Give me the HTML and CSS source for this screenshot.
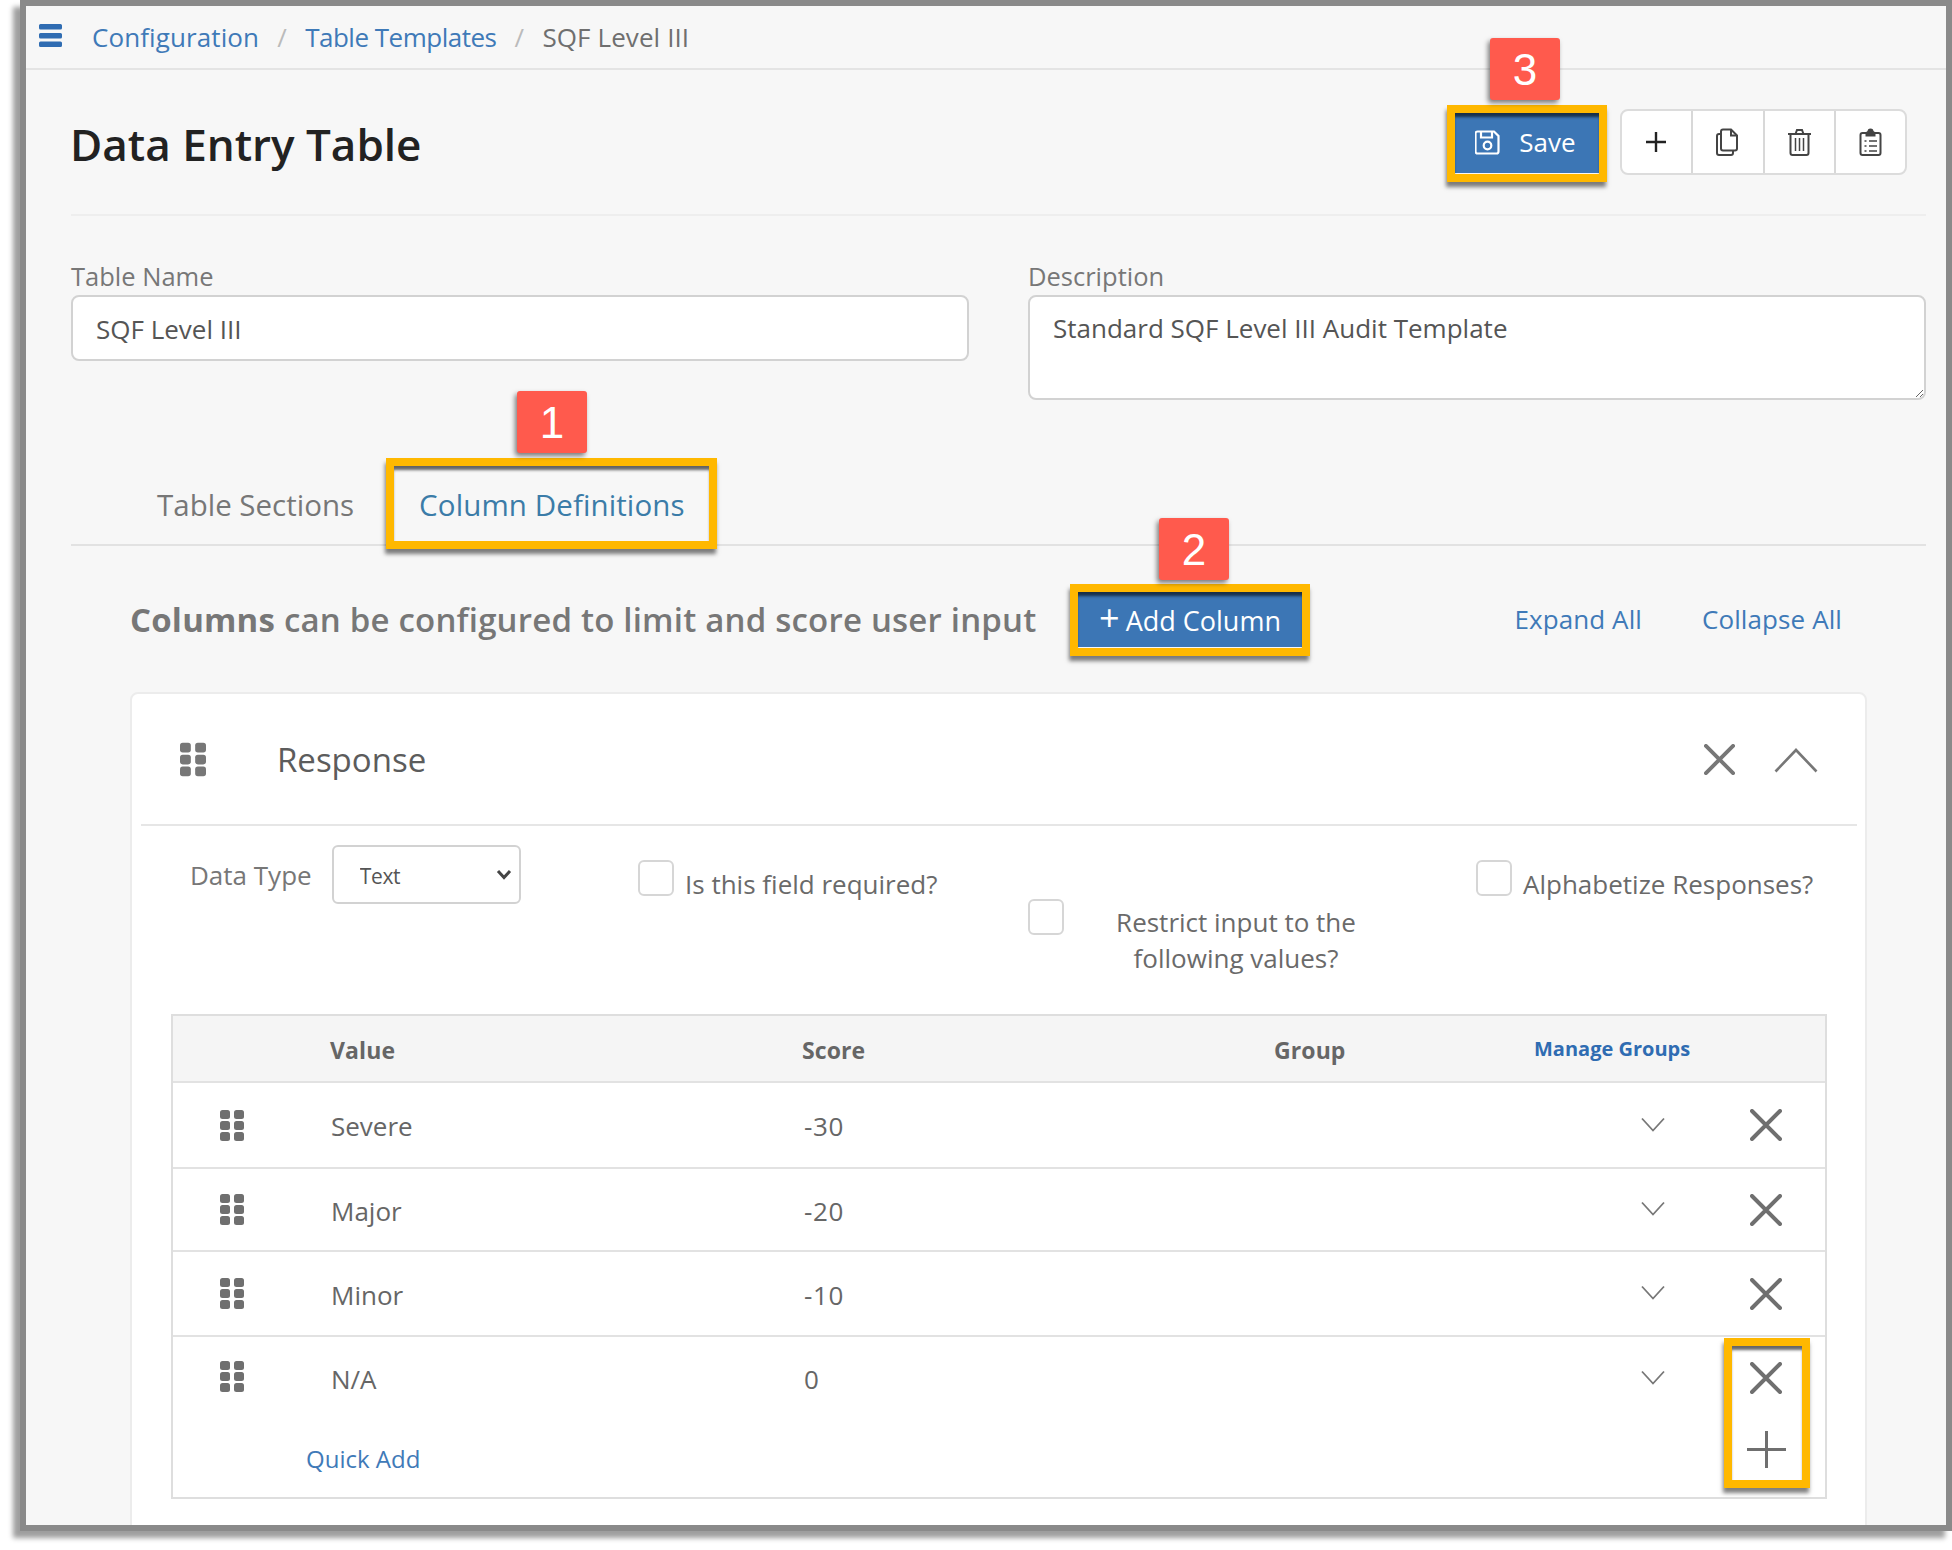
FILE: index.html
```html
<!DOCTYPE html>
<html lang="en">
<head>
<meta charset="utf-8">
<title>Data Entry Table</title>
<link rel="stylesheet" href="styles.css">
</head>
<body>
<svg class="defs" width="0" height="0" aria-hidden="true">
  <symbol id="i-drag" viewBox="0 0 24 31"><g fill="currentColor"><rect x="0" y="0" width="10" height="9" rx="2.5"/><rect x="14" y="0" width="10" height="9" rx="2.5"/><rect x="0" y="11" width="10" height="9" rx="2.5"/><rect x="14" y="11" width="10" height="9" rx="2.5"/><rect x="0" y="22" width="10" height="9" rx="2.5"/><rect x="14" y="22" width="10" height="9" rx="2.5"/></g></symbol>
  <symbol id="i-x" viewBox="0 0 32 32"><path d="M2 2 30 30M30 2 2 30" fill="none" stroke="currentColor" stroke-width="4" stroke-linecap="round"/></symbol>
  <symbol id="i-chev" viewBox="0 0 24 15"><path d="M1 1.500 12 13.500 23 1.500" fill="none" stroke="currentColor" stroke-width="1.800"/></symbol>
</svg>
<div class="window">
  <nav class="crumbs">
    <svg class="burger" viewBox="0 0 23 23"><path d="M0 1.500A1.500 1.500 0 0 1 1.500 0h20a1.500 1.500 0 0 1 1.500 1.500V4a1.500 1.500 0 0 1-1.500 1.500h-20A1.500 1.500 0 0 1 0 4ZM0 10.500A1.500 1.500 0 0 1 1.500 9h20a1.500 1.500 0 0 1 1.500 1.500V13a1.500 1.500 0 0 1-1.500 1.500h-20A1.500 1.500 0 0 1 0 13ZM0 19a1.500 1.500 0 0 1 1.500-1.500h20A1.500 1.500 0 0 1 23 19v2.500a1.500 1.500 0 0 1-1.500 1.500h-20A1.500 1.500 0 0 1 0 21.500Z" fill="currentColor"/></svg>
    <a class="link">Configuration</a><span class="sep">/</span><a class="link crumb-tight">Table Templates</a><span class="sep">/</span><span class="here">SQF Level III</span>
  </nav>
  <main class="page">
    <header class="titlebar">
      <h1 class="title">Data Entry Table</h1>
      <div class="actions">
        <button class="btn btn-save">
          <svg class="save-icon" viewBox="0 0 25 25"><g fill="none" stroke="currentColor" stroke-width="2.200"><path d="M2.500 1.500h16.500l4.500 4.500v15.500a2 2 0 0 1-2 2h-19a2 2 0 0 1-2-2v-18a2 2 0 0 1 2-2Z"/><path d="M6 1.500v6h11v-6"/><circle cx="12.500" cy="15.500" r="3.800"/></g></svg>
          <span>Save</span>
        </button>
        <div class="tools">
          <span class="tool"><svg viewBox="0 0 22 22"><path d="M11 1v20M1 11h20" fill="none" stroke="currentColor" stroke-width="2.400"/></svg></span>
          <span class="tool"><svg viewBox="0 0 25 28"><g fill="none" stroke="currentColor" stroke-width="2"><path d="M8 1.500h8l6 6v13a2 2 0 0 1-2 2H8a2 2 0 0 1-2-2v-17a2 2 0 0 1 2-2Z"/><path d="M16 1.500v6h6"/><path d="M6 6H4a2 2 0 0 0-2 2v17a2 2 0 0 0 2 2h12a2 2 0 0 0 2-2v-2"/></g></svg></span>
          <span class="tool"><svg viewBox="0 0 25 28"><g fill="none" stroke="currentColor" stroke-width="2"><path d="M1 6h23M8.500 6l1.500-4h5l1.500 4"/><path d="M3.500 6v19a2 2 0 0 0 2 2h14a2 2 0 0 0 2-2V6"/><path d="M8.500 10v13M12.500 10v13M16.500 10v13" stroke-width="1.500"/></g></svg></span>
          <span class="tool"><svg viewBox="0 0 23 28"><g fill="none" stroke="currentColor" stroke-width="2"><rect x="1.500" y="5" width="20" height="22" rx="2"/><path d="M7.500 5l2-1.500a2 2 0 0 1 4 0l2 1.500v2.500h-8Z" fill="currentColor"/><path d="M5.500 13h2M10 13h8M5.500 18h2M10 18h8M5.500 23h2M10 23h8" stroke-width="1.700"/></g></svg></span>
        </div>
      </div>
    </header>

    <section class="fields">
      <div class="field">
        <label class="field-label" for="tname">Table Name</label>
        <input class="control" id="tname" type="text" value="SQF Level III">
      </div>
      <div class="field">
        <label class="field-label" for="tdesc">Description</label>
        <textarea class="control control-area" id="tdesc">Standard SQF Level III Audit Template</textarea>
      </div>
    </section>

    <div class="tabs">
      <span class="tab">Table Sections</span>
      <span class="tab tab-on">Column Definitions</span>
    </div>

    <div class="section-head">
      <h2 class="lede"><b>Columns</b> can be configured to limit and score user input</h2>
      <button class="btn btn-add"><span class="add-plus">+</span> Add Column</button>
      <div class="head-links"><a class="link">Expand All</a><a class="link">Collapse All</a></div>
    </div>

    <section class="card">
      <div class="card-head">
        <svg class="drag-lg"><use href="#i-drag"/></svg>
        <span class="card-name">Response</span>
        <svg class="card-x"><use href="#i-x"/></svg>
        <svg class="card-up" viewBox="0 0 44 25"><path d="M1.500 23.500 22 2 42.500 23.500" fill="none" stroke="currentColor" stroke-width="2.600"/></svg>
      </div>
      <div class="options">
        <div class="opt opt-type">
          <label class="opt-label" for="dtype">Data Type</label>
          <span class="select-wrap">
            <select class="select" id="dtype"><option>Text</option></select>
            <svg class="select-chev" viewBox="0 0 16 11"><path d="M2 2 8 8.500 14 2" fill="none" stroke="currentColor" stroke-width="3"/></svg>
          </span>
        </div>
        <label class="opt opt-check"><input class="box" type="checkbox"><span class="check-text">Is this field required?</span></label>
        <label class="opt opt-restrict"><input class="box" type="checkbox"><span class="restrict-text">Restrict input to the following values?</span></label>
        <label class="opt opt-check"><input class="box" type="checkbox"><span class="check-text">Alphabetize Responses?</span></label>
      </div>

      <div class="values">
        <div class="vrow vhead">
          <span></span>
          <b class="th">Value</b>
          <b class="th">Score</b>
          <div class="th-group"><b class="th">Group</b><a class="manage">Manage Groups</a></div>
        </div>
        <div class="vrow">
          <svg class="drag"><use href="#i-drag"/></svg><span class="td">Severe</span><span class="td num">-30</span><span></span>
          <svg class="chev"><use href="#i-chev"/></svg><svg class="del"><use href="#i-x"/></svg>
        </div>
        <div class="vrow">
          <svg class="drag"><use href="#i-drag"/></svg><span class="td">Major</span><span class="td num">-20</span><span></span>
          <svg class="chev"><use href="#i-chev"/></svg><svg class="del"><use href="#i-x"/></svg>
        </div>
        <div class="vrow">
          <svg class="drag"><use href="#i-drag"/></svg><span class="td">Minor</span><span class="td num">-10</span><span></span>
          <svg class="chev"><use href="#i-chev"/></svg><svg class="del"><use href="#i-x"/></svg>
        </div>
        <div class="vrow vlast">
          <svg class="drag"><use href="#i-drag"/></svg><span class="td">N/A</span><span class="td num">0</span><span></span>
          <svg class="chev"><use href="#i-chev"/></svg><svg class="del"><use href="#i-x"/></svg>
          <a class="link quick">Quick Add</a>
          <svg class="plus" viewBox="0 0 39 37"><path d="M19.500 0v37M0 18.500h39" fill="none" stroke="currentColor" stroke-width="3"/></svg>
        </div>
      </div>
    </section>
  </main>

  <div class="callout c-save"></div>
  <div class="callout c-tab"></div>
  <div class="callout c-add"></div>
  <div class="callout c-row"></div>
  <div class="badge b-1">1</div>
  <div class="badge b-2">2</div>
  <div class="badge b-3">3</div>
</div>
</body>
</html>
```

FILE: styles.css
```css
* { box-sizing: border-box; }
html, body { margin: 0; padding: 0; background: #fff; }
body { width: 1952px; height: 1550px; overflow: hidden; font-family: "Open Sans", "Liberation Sans", sans-serif; color: #5c5c5c; }
.defs { position: absolute; }
a { text-decoration: none; }
h1, h2 { margin: 0; }
button { font-family: inherit; }

.window {
  position: relative;
  width: 1932px;
  height: 1531px;
  margin-left: 20px;
  border: 6px solid #8a8a8a;
  background: #f7f7f7;
  box-shadow: -7px 7px 5px rgba(0, 0, 0, .38);
}

.link { color: #3f7ab8; }
.crumbs {
  display: flex;
  align-items: center;
  height: 64px;
  padding-left: 13px;
  border-bottom: 2px solid #e4e4e4;
  font-size: 26px;
  letter-spacing: .1px;
}
.crumb-tight { letter-spacing: -.5px; }
.burger { width: 23px; height: 23px; color: #2f6cb2; margin-right: 30px; margin-top: -4px; }
.sep { width: 46px; text-align: center; color: #bbb; }
.here { color: #6f6f6f; }

.page { padding: 0 20px 0 45px; height: 1455px; overflow: hidden; }

.titlebar {
  display: flex;
  align-items: center;
  justify-content: space-between;
  height: 146px;
  border-bottom: 2px solid #eeeeee;
}
.title { font-size: 44px; font-weight: 600; color: #222; margin-left: -1px; padding-top: 3px; }
.actions { display: flex; align-items: center; gap: 21px; padding-right: 19px; }
.btn {
  display: inline-flex;
  align-items: center;
  justify-content: center;
  border: 0;
  background: #3c76b5;
  color: #fff;
  padding: 0;
}
.btn-save { width: 144px; height: 61px; gap: 19px; font-size: 26px; }
.save-icon { width: 25px; height: 25px; margin-left: -3px; }
.tools {
  display: flex;
  width: 287px;
  height: 66px;
  background: #fff;
  border: 2px solid #dcdcdc;
  border-radius: 8px;
}
.tool {
  flex: 1;
  display: flex;
  align-items: center;
  justify-content: center;
  border-right: 2px solid #d8d8d8;
  color: #444;
}
.tool:last-child { border-right: 0; }
.tool svg { width: 25px; height: 28px; }
.tool:first-child svg { width: 22px; height: 22px; color: #222; margin-right: 1px; }

.fields { display: grid; grid-template-columns: 898px 898px; gap: 59px; padding-top: 43px; align-items: start; }
.field { display: flex; flex-direction: column; }
.field-label { font-size: 25.500px; line-height: 34px; height: 36px; color: #777; }
.control {
  width: 100%;
  height: 66px;
  padding: 2px 23px 0;
  border: 2px solid #d2d2d2;
  border-radius: 8px;
  background: #fff;
  font: 26px "Open Sans", "Liberation Sans", sans-serif;
  color: #555;
  outline: 0;
}
.control-area { height: 105px; padding: 13px 23px; line-height: 36px; resize: vertical; display: block; }

.tabs {
  display: flex;
  align-items: center;
  gap: 65px;
  height: 82px;
  margin-top: 64px;
  padding-left: 86px;
  border-bottom: 2px solid #e2e2e2;
  font-size: 29.500px;
  color: #777;
}
.tab-on { color: #3b7ca8; letter-spacing: .1px; }

.section-head { display: flex; align-items: center; height: 146px; padding: 0 84px 0 59px; }
.lede { width: 905px; font-size: 33px; font-weight: 600; color: #777; letter-spacing: .2px; white-space: nowrap; }
.lede b { font-weight: 700; }
.btn-add { width: 224px; height: 56px; margin-left: 43px; margin-top: -1px; padding-top: 3px; font-size: 27px; gap: 6px; flex: none; }
.add-plus { font-size: 36px; line-height: 1; margin-top: -5px; }
.head-links { display: flex; gap: 60px; margin-left: auto; font-size: 26px; letter-spacing: .1px; }

.card {
  margin: 0 59px;
  padding-bottom: 40px;
  background: #fff;
  border: 2px solid #ececec;
  border-radius: 8px;
}
.card-head {
  display: flex;
  align-items: center;
  height: 132px;
  margin: 0 8px 0 9px;
  padding: 0 39px 0 39px;
  border-bottom: 2px solid #e6e6e6;
  color: #777;
}
.drag-lg { width: 26px; height: 35px; flex: none; margin-right: 71px; }
.card-name { flex: 1; font-size: 33px; color: #5c5c5c; }
.card-x { width: 31px; height: 31px; margin-right: 39px; }
.card-up { width: 44px; height: 25px; margin-top: 2px; }

.options {
  display: grid;
  grid-template-columns: 448px 390px 448px 1fr;
  height: 188px;
  padding-left: 58px;
  align-items: start;
}
.opt-type { display: flex; align-items: center; gap: 20px; margin-top: 19px; }
.opt-label { font-size: 26px; color: #777; }
.select-wrap { display: block; position: relative; }
.select {
  appearance: none;
  display: block;
  width: 189px;
  height: 59px;
  padding: 2px 0 0 26px;
  border: 2px solid #d2d2d2;
  border-radius: 6px;
  background-color: #fff;
  font: 21px "Open Sans", "Liberation Sans", sans-serif;
  letter-spacing: -.3px;
  color: #555;
}
.select-chev { position: absolute; right: 9px; top: 24px; width: 16px; height: 11px; color: #444; pointer-events: none; }
.box {
  appearance: none;
  flex: none;
  width: 36px;
  height: 36px;
  margin: 0;
  background: #fff;
  border: 2px solid #d6d6d6;
  border-radius: 6px;
}
.opt-check { display: flex; gap: 11px; margin-top: 34px; font-size: 26px; color: #6a6a6a; }
.check-text { padding-top: 6px; white-space: nowrap; }
.opt-restrict { display: flex; gap: 47px; margin-top: 73px; font-size: 26px; color: #6a6a6a; }
.restrict-text { display: block; width: 250px; padding-top: 5px; text-align: center; line-height: 36px; }

.values { margin: 0 39px; width: 1656px; border: 2px solid #dedede; background: #fff; }
.vrow {
  display: grid;
  grid-template-columns: 157px 472px 472px 367px 109px 1fr;
  align-items: center;
  height: 85px;
  border-bottom: 2px solid #e2e2e2;
  color: #6f6f6f;
}
.vrow:nth-child(2) { height: 86px; }
.vrow:nth-child(3) { height: 83px; }
.vhead { height: 67px; background: #f5f5f5; }
.th { font-size: 23px; font-weight: 700; color: #666; letter-spacing: .1px; padding-top: 2px; }
.th-group { grid-column: 4 / span 3; display: flex; }
.th-group .th { width: 260px; }
.manage { font-size: 20px; font-weight: 700; color: #2f6cb2; padding-top: 3px; }
.td { font-size: 26px; color: #666; padding-top: 2px; padding-left: 1px; }
.num { letter-spacing: .6px; padding-left: 2px; }
.drag { width: 24px; height: 31px; margin-left: 47px; }
.chev { width: 24px; height: 15px; color: #777; margin-top: -2px; }
.del { width: 32px; height: 32px; }
.vlast { height: 160px; grid-template-rows: 82px 1fr; border-bottom: 0; }
.vlast .drag { margin-top: -3px; }
.quick { grid-column: 1 / span 2; padding-left: 133px; font-size: 24px; }
.plus { grid-column: 6; grid-row: 2; width: 39px; height: 37px; margin-left: -3px; margin-top: -18px; }

.callout {
  position: absolute;
  border: 8px solid #ffb800;
  box-shadow: -1px 5px 4px rgba(0, 0, 0, .5), inset 0 5px 3px -1px rgba(0, 0, 0, .6);
}
.c-save { left: 1421px; top: 99px; width: 160px; height: 77px; }
.c-tab { left: 360px; top: 452px; width: 331px; height: 91px; }
.c-add { left: 1044px; top: 578px; width: 240px; height: 72px; }
.c-row { left: 1698px; top: 1332px; width: 86px; height: 150px; }

.badge {
  position: absolute;
  display: flex;
  align-items: center;
  justify-content: center;
  width: 70px;
  height: 62px;
  padding-top: 2px;
  background: #ff5a4d;
  border-radius: 3px;
  box-shadow: -2px 3px 5px rgba(0, 0, 0, .5);
  color: #fff;
  font: 44px "Liberation Sans", Arial, sans-serif;
}
.b-1 { left: 491px; top: 385px; }
.b-2 { left: 1133px; top: 512px; }
.b-3 { left: 1464px; top: 32px; }
```
